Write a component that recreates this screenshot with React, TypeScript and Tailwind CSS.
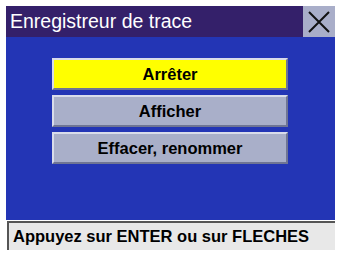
const menuItems = [
  { label: 'Arrêter', active: true },
  { label: 'Afficher', active: false },
  { label: 'Effacer, renommer', active: false },
];

export default function App() {
  return (
    <div
      className="w-[337px] h-[253px] bg-white pl-[6px] pt-[6px]"
      style={{ fontFamily: '"Liberation Sans", Arial, sans-serif' }}
    >
      <div className="w-[329px] flex flex-col">
        {/* title bar */}
        <div className="h-[31px] flex">
          <div className="flex-1 bg-[#34206a] text-white text-[19.5px] leading-[31px] pl-[4px]">
            Enregistreur de trace
          </div>
          <div className="w-[32px] bg-[#a9aec9] flex items-center justify-center">
            <svg width="24" height="24" viewBox="0 0 24 24">
              <path d="M2 2 L22 22 M22 2 L2 22" stroke="#111" strokeWidth="2" fill="none" />
            </svg>
          </div>
        </div>

        {/* menu area */}
        <div className="h-[183px] bg-[#2335b5] pt-[21px] pl-[46px] flex flex-col gap-[5px]">
          {menuItems.map((item) => (
            <div
              key={item.label}
              className={`w-[236px] h-[32px] flex items-center justify-center text-[16.5px] font-bold text-black border-2 border-t-[#d9dcea] border-l-[#d9dcea] border-b-[#6f7594] border-r-[#6f7594] ${
                item.active ? 'bg-[#ffff00]' : 'bg-[#a9afc9]'
              }`}
            >
              {item.label}
            </div>
          ))}
        </div>

        {/* status bar */}
        <div className="h-[29px] mt-[1px] ml-[1px] bg-[#e8e8e8] border-t-2 border-l-2 border-[#555555] text-[16.5px] font-bold text-black leading-[26px] pl-[4px]">
          Appuyez sur ENTER ou sur FLECHES
        </div>
      </div>
    </div>
  );
}
